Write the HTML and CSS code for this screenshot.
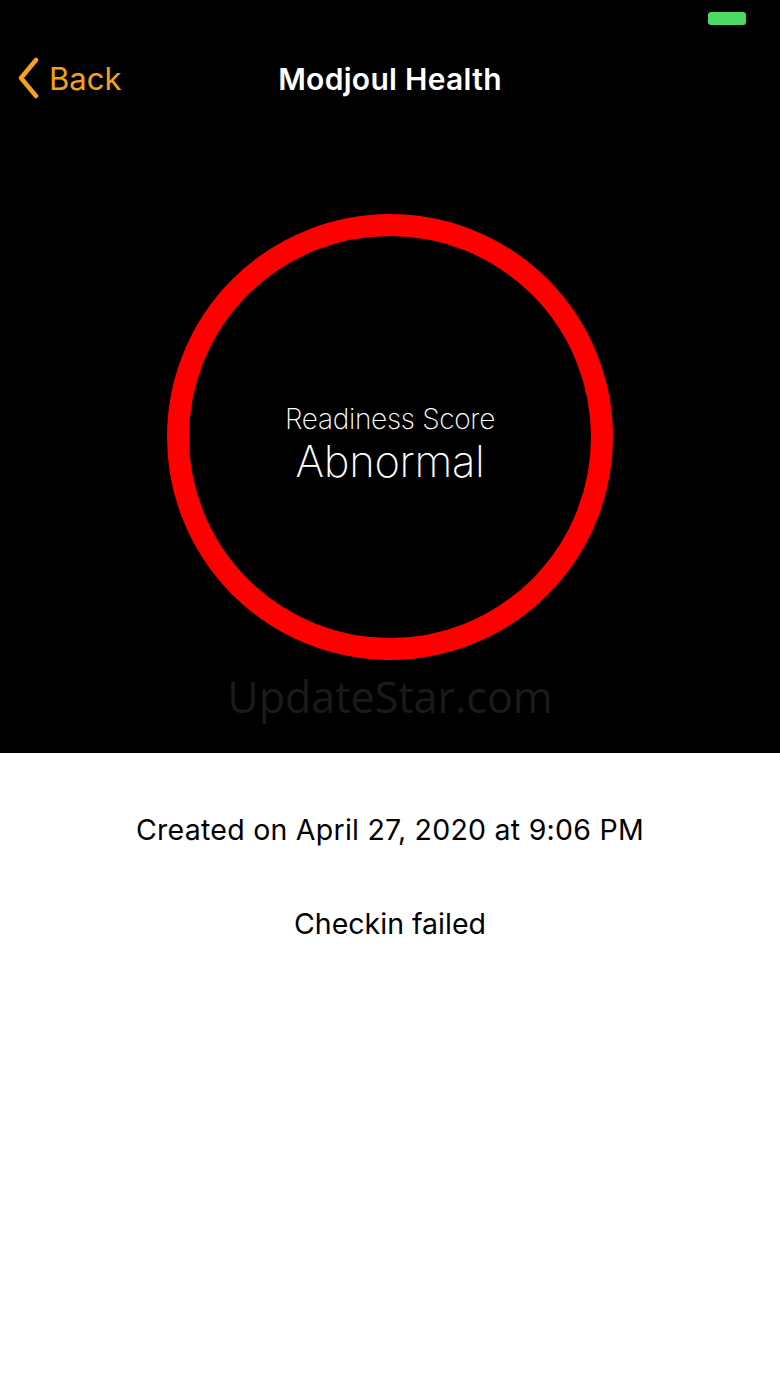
FILE: index.html
```html
<!DOCTYPE html>
<html>
<head>
<meta charset="utf-8">
<link rel="stylesheet" href="styles.css">
</head>
<body>
<div class="screen">
  <section class="dark">
    <div class="status">
      <div class="battery"></div>
    </div>
    <header class="nav">
      <div class="back">
        <svg class="chev" width="24" height="42" viewBox="0 0 24 42"><path d="M20 3 L5 21 L20 39" fill="none" stroke="#f5a01e" stroke-width="4.5" stroke-linecap="round" stroke-linejoin="round"/></svg>
        <span class="back-text">Back</span>
      </div>
      <h1 class="title">Modjoul Health</h1>
    </header>
    <div class="ring-wrap">
      <div class="ring">
        <div class="label">Readiness Score</div>
        <div class="value">Abnormal</div>
      </div>
    </div>
    <div class="watermark">UpdateStar.com</div>
  </section>
  <section class="light">
    <p class="created">Created on April 27, 2020 at 9:06 PM</p>
    <p class="status-text">Checkin failed</p>
  </section>
</div>
</body>
</html>
```
FILE: styles.css
```css
* { box-sizing: border-box; }
html, body { margin: 0; padding: 0; background: #fff; }
.screen { width: 780px; height: 1387px; display: flex; flex-direction: column; font-family: Inter, "Liberation Sans", sans-serif; }
.dark { background: #000; height: 753px; display: flex; flex-direction: column; position: relative; }
.status { height: 36px; display: flex; justify-content: flex-end; padding: 12px 34px 0 0; }
.battery { width: 38px; height: 13px; background: #4cd964; border-radius: 3px; }
.nav { height: 86px; position: relative; display: flex; align-items: center; justify-content: center; }
.back { position: absolute; left: 16px; top: 21px; display: flex; align-items: center; gap: 9px; color: #f5a01e; }
.back-text { font-size: 31px; font-weight: 400; }
.title { margin: 0; color: #fff; font-size: 30px; font-weight: 600; margin-top: 0; letter-spacing: 0.3px; }
.ring-wrap { display: flex; justify-content: center; padding-top: 92px; }
.ring { width: 446px; height: 446px; border-radius: 50%; border: 22px solid #ff0000; display: flex; flex-direction: column; align-items: center; justify-content: center; color: #fff; padding-top: 14px; }
.label { font-size: 28px; font-weight: 200; line-height: 34px; letter-spacing: -0.3px; }
.value { font-size: 43.5px; font-weight: 200; line-height: 50px; letter-spacing: -0.3px; }
.watermark { text-align: center; color: #1a1a1a; font-family: "Open Sans", sans-serif; font-size: 43px; margin-top: 7px; }
.light { flex: 1; display: flex; flex-direction: column; align-items: center; padding-top: 58px; color: #000; }
.light p { margin: 0; font-size: 28.5px; font-weight: 400; line-height: 38px; }
.created { letter-spacing: 0.25px; }
.status-text { margin-top: 56px !important; }
```
